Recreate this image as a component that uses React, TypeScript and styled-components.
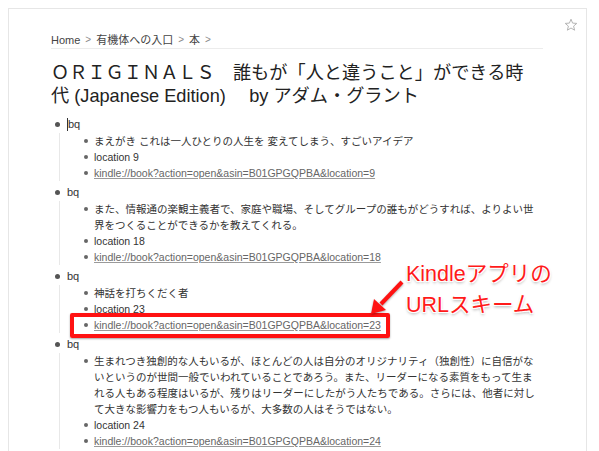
import React from "react";
import styled, { createGlobalStyle } from "styled-components";

const GlobalStyle = createGlobalStyle`
  html, body {
    margin: 0;
    padding: 0;
    background: #fff;
    overflow: hidden;
  }
  body {
    font-family: "Liberation Sans", "Noto Sans CJK JP", sans-serif;
    color: #333;
  }
`;

type Note = {
  lines: string[];
  location: number;
  caret?: boolean;
};

const notes: Note[] = [
  {
    lines: ["まえがき これは一人ひとりの人生を 変えてしまう、すごいアイデア"],
    location: 9,
    caret: true,
  },
  {
    lines: [
      "また、情報通の楽観主義者で、家庭や職場、そしてグループの誰もがどうすれば、よりよい世",
      "界をつくることができるかを教えてくれる。",
    ],
    location: 18,
  },
  {
    lines: ["神話を打ちくだく者"],
    location: 23,
  },
  {
    lines: [
      "生まれつき独創的な人もいるが、ほとんどの人は自分のオリジナリティ（独創性）に自信がな",
      "いというのが世間一般でいわれていることであろう。また、リーダーになる素質をもって生ま",
      "れる人もある程度はいるが、残りはリーダーにしたがう人たちである。さらには、他者に対し",
      "て大きな影響力をもつ人もいるが、大多数の人はそうではない。",
    ],
    location: 24,
  },
];

const kindleUrl = (loc: number) =>
  `kindle://book?action=open&asin=B01GPGQPBA&location=${loc}`;

function App() {
  return (
    <>
      <GlobalStyle />
      <Page>
        <Panel>
          <Star viewBox="0 0 14 14">
            <path d="M7 1.2 L8.6 5.1 L12.8 5.4 L9.6 8.1 L10.6 12.2 L7 10 L3.4 12.2 L4.4 8.1 L1.2 5.4 L5.4 5.1 Z" />
          </Star>
          <Crumbs>
            <Crumb>Home</Crumb>
            <Sep>&gt;</Sep>
            <Crumb>有機体への入口</Crumb>
            <Sep>&gt;</Sep>
            <Crumb>本</Crumb>
            <Sep>&gt;</Sep>
          </Crumbs>
          <Title>
            ＯＲＩＧＩＮＡＬＳ　誰もが「人と違うこと」ができる時代 (Japanese Edition)　 by アダム・グラント
          </Title>
          <Outline>
            {notes.map((n, i) => (
              <Item key={i}>
                <Row>
                  <Dot />
                  <Label>
                    {n.caret && <Caret />}
                    bq
                  </Label>
                </Row>
                <Children>
                  <Child>
                    <SmallDot />
                    <ChildText>
                      {n.lines.map((l, j) => (
                        <React.Fragment key={j}>
                          {j > 0 && <br />}
                          {l}
                        </React.Fragment>
                      ))}
                    </ChildText>
                  </Child>
                  <Child>
                    <SmallDot />
                    <ChildText>location {n.location}</ChildText>
                  </Child>
                  <Child>
                    <SmallDot />
                    <ChildText>
                      <Link>{kindleUrl(n.location)}</Link>
                    </ChildText>
                  </Child>
                </Children>
              </Item>
            ))}
          </Outline>
        </Panel>

        <Highlight />
        <Arrow viewBox="0 0 40 40">
          <line x1="33" y1="2" x2="12" y2="24" />
          <polygon points="2,34 5,19 17,30" />
        </Arrow>
        <Callout>
          Kindleアプリの
          <br />
          URLスキーム
        </Callout>
      </Page>
    </>
  );
}

const Page = styled.div`
  position: relative;
  width: 599px;
  height: 451px;
  padding: 8px 0 0 8px;
  box-sizing: border-box;
`;

const Panel = styled.div`
  position: relative;
  width: 579px;
  min-height: 460px;
  box-sizing: border-box;
  border: 1px solid #e6e6e6;
  border-bottom: none;
  background: #fff;
  padding: 24px 0 0 42px;
`;

const Star = styled.svg`
  position: absolute;
  top: 9px;
  right: 8px;
  width: 14px;
  height: 14px;
  fill: none;
  stroke: #b5b5b5;
  stroke-width: 1;
  stroke-linejoin: round;
`;

const Crumbs = styled.div`
  width: 492px;
  display: flex;
  align-items: center;
  gap: 5px;
  font-size: 11px;
  line-height: 14px;
  padding-bottom: 1px;
  border-bottom: 1px solid #ececec;
`;

const Crumb = styled.span`
  color: #444;
`;

const Sep = styled.span`
  color: #8a8a8a;
  font-size: 10px;
`;

const Title = styled.h1`
  width: 484px;
  margin: 13px 0 0;
  font-weight: normal;
  font-size: 18.2px;
  line-height: 23px;
  color: #222;
`;

const Outline = styled.div`
  width: 492px;
  margin-top: 8px;
  font-size: 10.5px;
  line-height: 16px;
`;

const Item = styled.div`
  margin-bottom: 3px;
`;

const Row = styled.div`
  display: flex;
  align-items: center;
  height: 16px;
`;

const Dot = styled.span`
  width: 5px;
  height: 5px;
  border-radius: 50%;
  background: #555;
  margin: 0 7px 0 4px;
  flex: none;
`;

const Label = styled.span`
  display: flex;
  align-items: center;
  font-size: 11px;
  color: #333;
`;

const Caret = styled.span`
  width: 1px;
  height: 13px;
  background: #333;
`;

const Children = styled.div`
  margin: 1px 0 0 8px;
  border-left: 1px solid #e8e8e8;
  padding-left: 24px;
`;

const Child = styled.div`
  display: flex;
  align-items: flex-start;
`;

const SmallDot = styled.span`
  width: 4px;
  height: 4px;
  border-radius: 50%;
  background: #666;
  margin: 6px 6px 0 0;
  flex: none;
`;

const ChildText = styled.div`
  color: #333;
  white-space: nowrap;
`;

const Link = styled.span`
  color: #666;
  text-decoration: underline;
  text-decoration-color: #9a9a9a;
`;

const Highlight = styled.div`
  position: absolute;
  left: 70px;
  top: 313px;
  width: 320px;
  height: 25px;
  box-sizing: border-box;
  border: 4px solid #ff1212;
  border-radius: 2px;
  box-shadow: 0 1px 2px rgba(0, 0, 0, 0.35);
`;

const Arrow = styled.svg`
  position: absolute;
  left: 369px;
  top: 280px;
  width: 40px;
  height: 40px;
  overflow: visible;
  filter: drop-shadow(0 1px 1px rgba(0, 0, 0, 0.35));

  line {
    stroke: #ff1212;
    stroke-width: 4;
  }
  polygon {
    fill: #ff1212;
  }
`;

const Callout = styled.div`
  position: absolute;
  left: 406px;
  top: 259px;
  font-family: "Liberation Sans", "Noto Sans CJK JP", sans-serif;
  font-size: 21.5px;
  line-height: 31px;
  color: #ff1a1a;
  text-shadow: -1px -1px 0 #fff, 1px -1px 0 #fff, -1px 1px 0 #fff,
    1px 1px 0 #fff, 0 2px 3px rgba(0, 0, 0, 0.35);
  white-space: nowrap;
`;

export default App;
